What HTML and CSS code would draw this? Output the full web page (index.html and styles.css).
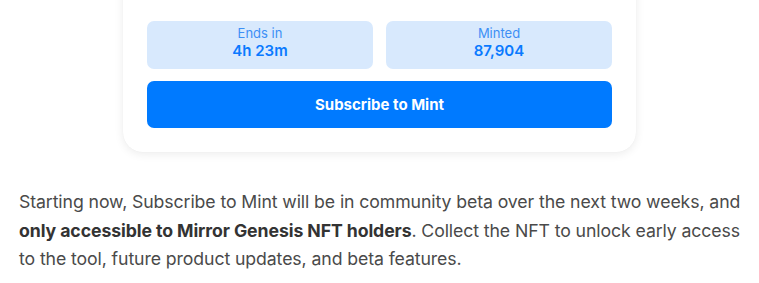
FILE: index.html
```html
<!DOCTYPE html>
<html lang="en">
<head>
    <meta charset="UTF-8">
    <title>Subscribe to Mint</title>
    <link rel="stylesheet" href="styles.css">
</head>
<body>
<div class="card">
    <div class="stats">
        <div class="stat">
            <span class="label">Ends in</span>
            <span class="value">4h 23m</span>
        </div>
        <div class="stat">
            <span class="label">Minted</span>
            <span class="value">87,904</span>
        </div>
    </div>
    <a href="javascript:;" class="btn">Subscribe to Mint</a>
</div>
<p class="text">Starting now, Subscribe to Mint will be in community beta over the next two weeks, and <strong>only accessible to Mirror Genesis NFT holders</strong>. Collect the NFT to unlock early access to the tool, future product updates, and beta features.</p>
</body>
</html>
```
FILE: styles.css
```css
*{
    margin:0;
    padding:0;
    box-sizing: border-box;
}
a{
    text-decoration: none;
}
body{
    background: #fff;
    font-family: Inter, "Noto Sans", sans-serif;
    overflow: hidden;
}
.card{
    width: 513px;
    margin: -30px auto 0;
    padding: 51px 24px 24px;
    background: #fff;
    border-radius: 20px;
    box-shadow: 0 2px 10px rgba(0,0,0,.08), 0 0 1px rgba(0,0,0,.06);
}
.stats{
    display: grid;
    grid-template-columns: 1fr 1fr;
    gap: 13px;
}
.stat{
    height: 48px;
    padding-top: 4px;
    background: #d8e9fd;
    border-radius: 7px;
    display: flex;
    flex-direction: column;
    align-items: center;
    color: #0a7aff;
}
.stat .label{
    font-size: 13px;
    line-height: 16px;
    color: #3d8ff5;
}
.stat .value{
    font-size: 15px;
    line-height: 20px;
    font-weight: 600;
}
.btn{
    display: block;
    margin-top: 12px;
    height: 47px;
    line-height: 47px;
    border-radius: 7px;
    background: #007aff;
    color: #fff;
    text-align: center;
    font-size: 15px;
    font-weight: 700;
}
.text{
    margin-top: 36px;
    padding: 0 8px 0 19px;
    font-size: 17.7px;
    line-height: 28.5px;
    letter-spacing: -0.1px;
    color: #4a4a4a;
}
.text strong{
    font-weight: 700;
    color: #333;
}
```
